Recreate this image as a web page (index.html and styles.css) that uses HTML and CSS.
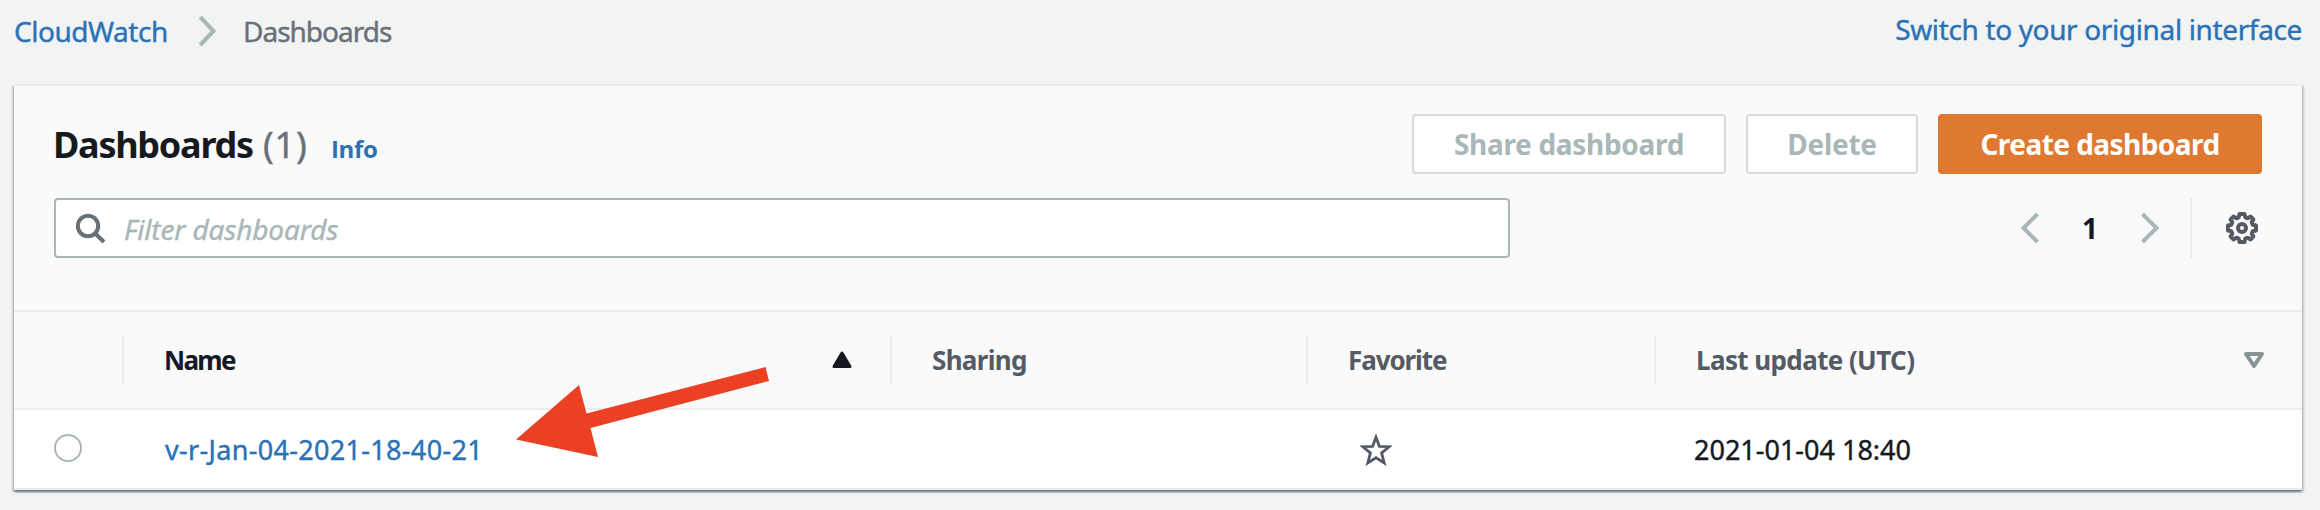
FILE: index.html
```html
<!DOCTYPE html>
<html lang="en">
<head>
<meta charset="utf-8">
<title>CloudWatch Dashboards</title>
<link rel="stylesheet" href="styles.css">
</head>
<body>
<header class="topbar">
  <nav class="breadcrumbs">
    <a class="crumb-link" href="#">CloudWatch</a>
    <svg class="crumb-sep" width="20" height="32" viewBox="0 0 20 32"><path d="M2.2 2 15.5 16 2.2 30" fill="none" stroke="#aab7b8" stroke-width="4"/></svg>
    <span class="crumb-current">Dashboards</span>
  </nav>
  <a class="switch-link" href="#">Switch to your original interface</a>
</header>

<main class="card">
  <div class="card-head">
    <div class="title-row">
      <h1 class="title">Dashboards</h1>
      <span class="count">(1)</span>
      <a class="info" href="#">Info</a>
      <div class="actions">
        <button class="btn btn-share" disabled><span>Share dashboard</span></button>
        <button class="btn btn-delete" disabled><span>Delete</span></button>
        <button class="btn btn-primary"><span>Create dashboard</span></button>
      </div>
    </div>
    <div class="filter-row">
      <div class="search">
        <svg class="search-icon" width="32" height="32" viewBox="0 0 32 32"><g fill="none" stroke="#687078" stroke-width="4"><circle cx="12" cy="13" r="10.2"/><path d="M19 20.200 28 29"/></g></svg>
        <span class="placeholder">Filter dashboards</span>
      </div>
      <div class="pager">
        <svg width="20" height="32" viewBox="0 0 20 32"><path d="M17.500 2 3.500 16 17.500 30" fill="none" stroke="#aab7b8" stroke-width="4"/></svg>
        <span class="page">1</span>
        <svg width="20" height="32" viewBox="0 0 20 32"><path d="M2.500 2 16.500 16 2.500 30" fill="none" stroke="#aab7b8" stroke-width="4"/></svg>
      </div>
      <div class="settings">
        <svg width="32" height="32" viewBox="0 0 32 32"><g fill="none" stroke="#545b64" stroke-width="4" stroke-linejoin="round"><path d="M13.500 2h5l.8 3.300 2.400 1 2.900-1.700 2.800 2.800-1.700 2.900 1 2.400 3.300.8v5l-3.300.8-1 2.400 1.700 2.900-2.800 2.800-2.900-1.700-2.400 1-.8 3.300h-5l-.8-3.300-2.400-1-2.900 1.700-2.800-2.800 1.700-2.900-1-2.400L2 18.500v-5l3.300-.8 1-2.400-1.700-2.900 2.800-2.800 2.900 1.700 2.400-1z"/><circle cx="16" cy="16" r="4"/></g></svg>
      </div>
    </div>
  </div>

  <div class="grid thead">
    <div class="th"></div>
    <div class="th sorted"><span class="t-name">Name</span>
      <svg width="20" height="18" viewBox="0 0 20 18"><path d="M10 2 18 15.500H2z" fill="#16191f" stroke="#16191f" stroke-width="3" stroke-linejoin="round"/></svg>
    </div>
    <div class="th"><span class="t-sharing">Sharing</span></div>
    <div class="th"><span class="t-favorite">Favorite</span></div>
    <div class="th last"><span class="t-update">Last update (UTC)</span>
      <svg width="20" height="16" viewBox="0 0 20 16"><path d="M2 2h16L10 14z" fill="none" stroke="#879596" stroke-width="4" stroke-linejoin="round"/></svg>
    </div>
  </div>

  <div class="grid row">
    <div class="td-radio"><span class="radio"></span></div>
    <div class="td-name"><a class="dash-link" href="#">v-r-Jan-04-2021-18-40-21</a></div>
    <div></div>
    <div class="td-star"><svg width="32" height="32" viewBox="0 0 32 32"><path d="M16 3.200 19.400 12.300 29.200 12.700 21.600 18.900 24.200 28.900 16 23.700 7.800 28.900 10.400 18.900 2.800 12.700 12.600 12.300z" fill="none" stroke="#545b64" stroke-width="2.800"/></svg></div>
    <div class="td-date"><span class="date">2021-01-04 18:40</span></div>
  </div>
</main>

<svg class="arrow" width="260" height="96" viewBox="512 364 260 96"><path d="M516 439.500 579 385 586.500 413.500 765.500 367 769 381 590.500 428 598 457z" fill="#eb4024"/></svg>
</body>
</html>
```
FILE: styles.css
```css
* { box-sizing: border-box; }
body {
  margin: 0;
  height: 510px;
  overflow: hidden;
  background: #f2f3f3;
  color: #16191f;
  font: 28px/40px "Noto Sans", "Open Sans", sans-serif;
  white-space: nowrap;
}
a { color: #2a72b8; text-decoration: none; }
svg { display: block; flex: none; }

.crumb-link, .crumb-current, .switch-link, .count, .placeholder, .dash-link, .date { -webkit-text-stroke: .4px currentColor; }

.topbar {
  height: 84px;
  padding: 9px 18px 0 14px;
  display: flex;
  justify-content: space-between;
}
.breadcrumbs { display: flex; height: 44px; align-items: center; }
.crumb-link { letter-spacing: -0.46px; width: 154px; }
.crumb-sep { margin: -1px 25px 0 30px; }
.crumb-current { color: #687078; letter-spacing: -1px; }
.switch-link { letter-spacing: -0.36px; }

.card {
  margin: 0 18px 0 14px;
  border-top: 2px solid #eaeded;
  background: #fff;
  box-shadow: 0 2px 2px rgba(0, 28, 36, .4), 2px 2px 2px rgba(0, 28, 36, .15), -2px 2px 2px rgba(0, 28, 36, .15);
}
.card-head {
  height: 226px;
  padding: 28px 40px 0;
  background: #fafafa;
  border-bottom: 2px solid #eaeded;
}

.title-row { display: flex; height: 60px; align-items: center; }
.title { margin: 0 0 0 -1px; padding-top: 2px; width: 210px; font-size: 36px; font-weight: 700; letter-spacing: -1.26px; }
.count { width: 68px; padding-top: 2px; color: #687078; font-size: 36px; letter-spacing: .8px; }
.info { font: 700 24px/40px "Open Sans", sans-serif; letter-spacing: -.34px; padding-top: 9px; }
.actions { display: flex; gap: 20px; margin-left: auto; }
.btn {
  height: 60px;
  padding: 0;
  border: 2px solid #d5dbdb;
  border-radius: 4px;
  background: #fff;
  color: #aab7b8;
  font: 700 28px/56px "Noto Sans", "Open Sans", sans-serif;
}
.btn-share { width: 314px; letter-spacing: -.3px; }
.btn-delete { width: 172px; letter-spacing: -.28px; }
.btn-primary { width: 324px; border-color: #df7932; background: #df7932; color: #fff; letter-spacing: -.55px; }

.filter-row { display: flex; height: 60px; margin-top: 24px; align-items: center; }
.search {
  display: flex;
  align-items: center;
  width: 1456px;
  height: 60px;
  padding-left: 20px;
  border: 2px solid #aab7b8;
  border-radius: 4px;
  background: #fff;
}
.search-icon { margin-top: 1px; }
.placeholder { margin-left: 16px; color: #aab7b8; font-style: italic; letter-spacing: -.15px; padding-top: 2px; }
.pager { display: flex; align-items: center; margin-left: auto; }
.page { width: 100px; text-align: center; font-weight: 700; }
.settings { display: flex; height: 60px; align-items: center; margin-left: 30px; padding: 0 4px 0 34px; border-left: 2px solid #eaeded; }

.grid { display: grid; grid-template-columns: 108px 768px 416px 348px 648px; }
.thead {
  height: 98px;
  padding-top: 24px;
  background: #fafafa;
  border-bottom: 2px solid #eaeded;
  color: #545b64;
  font-size: 26px;
  font-weight: 700;
}
.th { display: flex; align-items: center; justify-content: space-between; height: 48px; padding: 0 38px 0 40px; border-left: 2px solid #eaeded; }
.th:first-child { border: 0; }
.sorted { color: #16191f; }
.t-name { letter-spacing: -1.69px; }
.t-sharing { letter-spacing: -.68px; }
.t-favorite { letter-spacing: -1.09px; }
.t-update { letter-spacing: -.6px; }

.row { height: 80px; border-bottom: 2px solid #eaeded; font-size: 27px; }
.td-radio { padding: 24px 0 0 40px; }
.radio { display: block; width: 28px; height: 28px; border: 2px solid #aab7b8; border-radius: 50%; }
.td-name { padding: 20px 0 0 43px; }
.dash-link { letter-spacing: .32px; }
.td-star { padding: 24px 0 0 54px; }
.td-date { padding: 20px 0 0 40px; }
.date { letter-spacing: 0; }

/* Annotation drawn over the table */
.arrow { position: absolute; left: 512px; top: 364px; }
```
